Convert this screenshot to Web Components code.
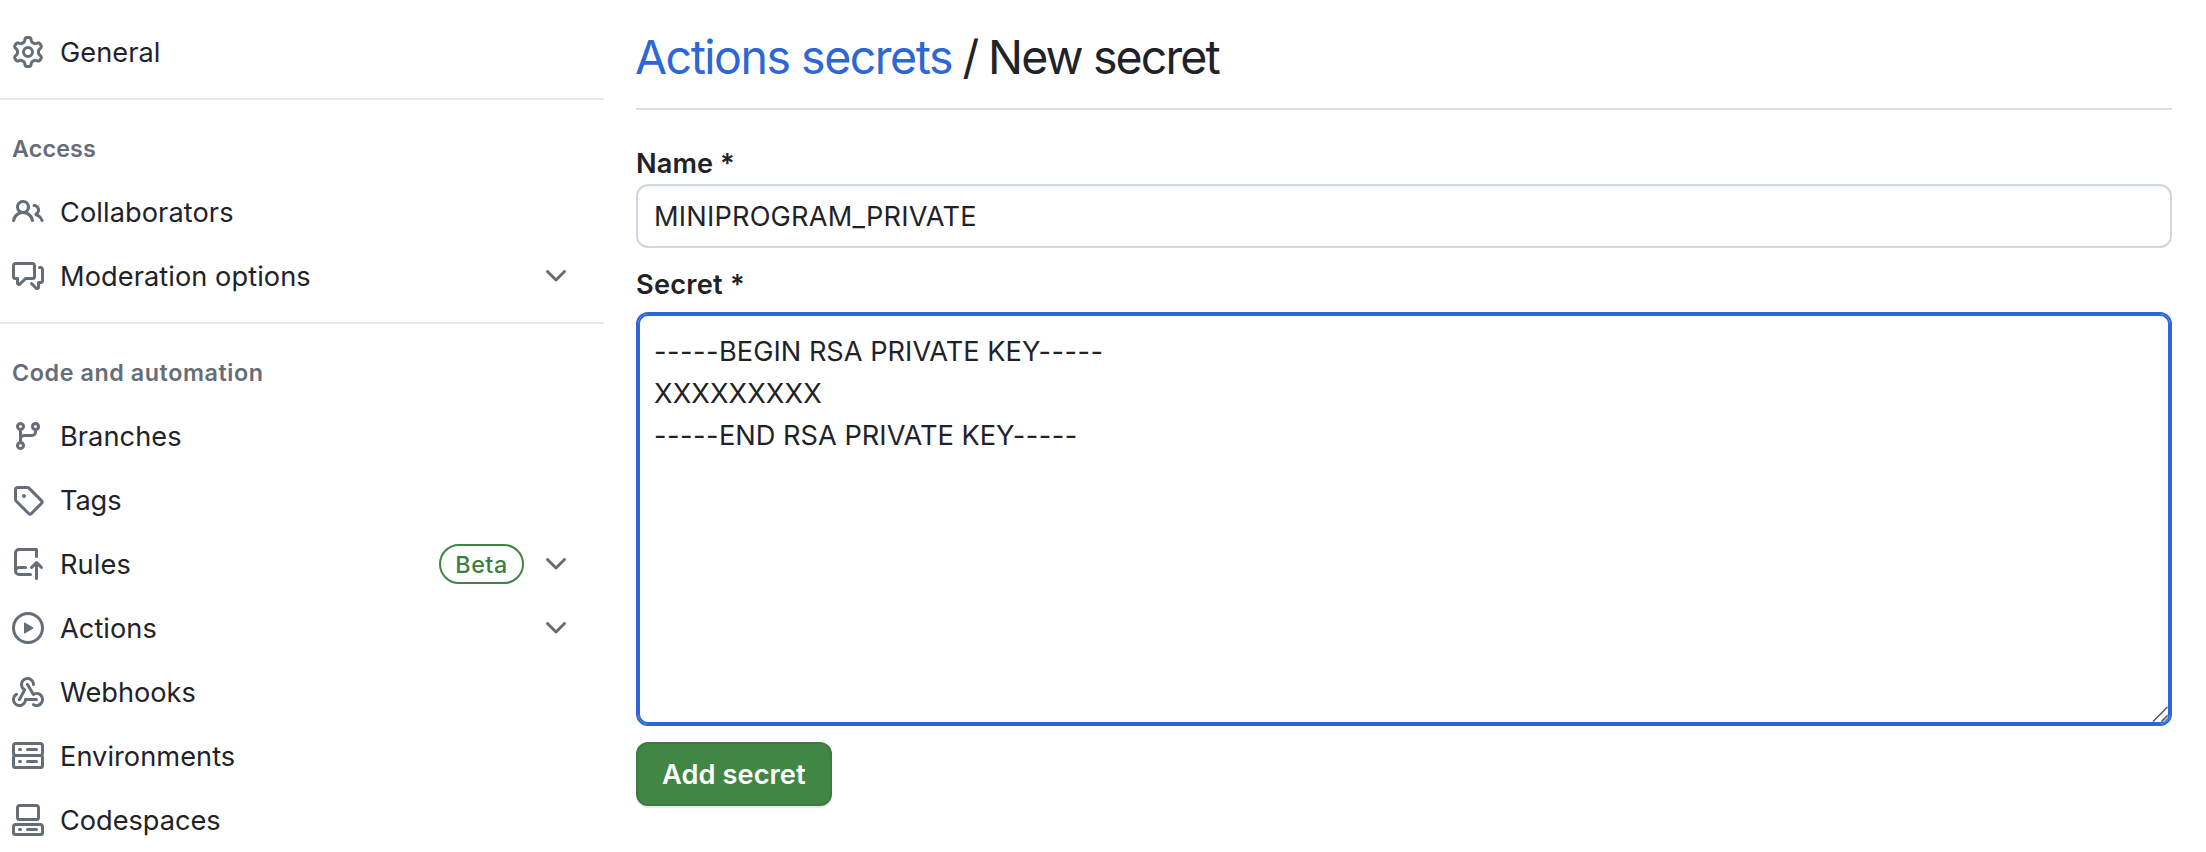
<!DOCTYPE html>
<html lang="en">
<head>
<meta charset="utf-8">
<title>New secret</title>
<style>
html,body{margin:0;height:100%;overflow:hidden;background:#fff}
body{font-family:Inter,"Liberation Sans",sans-serif;font-size:27.2px;color:#1f2328}
</style>
</head>
<body>
<settings-page>
  <settings-nav slot="nav">
    <nav-group>
      <nav-item icon="gear" style="--ls:.05px">General</nav-item>
    </nav-group>
    <nav-group heading="Access" style="--hls:.14px">
      <nav-item icon="people" style="--ls:.08px">Collaborators</nav-item>
      <nav-item icon="discussion" expandable style="--ls:.07px">Moderation options</nav-item>
    </nav-group>
    <nav-group heading="Code and automation" style="--hls:.58px">
      <nav-item icon="branch" style="--ls:.05px">Branches</nav-item>
      <nav-item icon="tag" style="--ls:-.1px">Tags</nav-item>
      <nav-item icon="push" expandable style="--ls:.1px">Rules<state-label slot="badge">Beta</state-label></nav-item>
      <nav-item icon="play" expandable style="--ls:.05px">Actions</nav-item>
      <nav-item icon="webhook" style="--ls:0px">Webhooks</nav-item>
      <nav-item icon="server" style="--ls:.04px">Environments</nav-item>
      <nav-item icon="codespaces" style="--ls:-.04px">Codespaces</nav-item>
    </nav-group>
  </settings-nav>
  <secret-form></secret-form>
</settings-page>
<script>
const ICONS = {
gear:"M8 0a8.2 8.2 0 0 1 .701.031C9.444.095 9.99.645 10.16 1.29l.288 1.107c.018.066.079.158.212.224.231.114.454.243.668.386.123.082.233.09.299.071l1.103-.303c.644-.176 1.392.021 1.82.63.27.385.506.792.704 1.218.315.675.111 1.422-.364 1.891l-.814.806c-.049.048-.098.147-.088.294.016.257.016.515 0 .772-.01.147.038.246.088.294l.814.806c.475.469.679 1.216.364 1.891a7.977 7.977 0 0 1-.704 1.217c-.428.61-1.176.807-1.82.63l-1.102-.302c-.067-.019-.177-.011-.3.071a5.909 5.909 0 0 1-.668.386c-.133.066-.194.158-.211.224l-.29 1.106c-.168.646-.715 1.196-1.458 1.26a8.006 8.006 0 0 1-1.402 0c-.743-.064-1.289-.614-1.458-1.26l-.289-1.106c-.018-.066-.079-.158-.212-.224a5.738 5.738 0 0 1-.668-.386c-.123-.082-.233-.09-.299-.071l-1.103.303c-.644.176-1.392-.021-1.82-.63a8.12 8.12 0 0 1-.704-1.218c-.315-.675-.111-1.422.363-1.891l.815-.806c.05-.048.098-.147.088-.294a6.214 6.214 0 0 1 0-.772c.01-.147-.038-.246-.088-.294l-.815-.806C.635 6.045.431 5.298.746 4.623a7.92 7.92 0 0 1 .704-1.217c.428-.61 1.176-.807 1.82-.63l1.102.302c.067.019.177.011.3-.071.214-.143.437-.272.668-.386.133-.066.194-.158.211-.224l.29-1.106C6.009.645 6.556.095 7.299.03 7.53.01 7.764 0 8 0Zm-.571 1.525c-.036.003-.108.036-.137.146l-.289 1.105c-.147.561-.549.967-.998 1.189-.173.086-.34.183-.5.29-.417.278-.97.423-1.529.27l-1.103-.303c-.109-.03-.175.016-.195.045-.22.312-.412.644-.573.99-.014.031-.021.11.059.19l.815.806c.411.406.562.957.53 1.456a4.709 4.709 0 0 0 0 .582c.032.499-.119 1.05-.53 1.456l-.815.806c-.081.08-.073.159-.059.19.162.346.353.677.573.989.02.03.085.076.195.046l1.102-.303c.56-.153 1.113-.008 1.53.27.161.107.328.204.501.29.447.222.85.629.997 1.189l.289 1.105c.029.109.101.143.137.146a6.6 6.6 0 0 0 1.142 0c.036-.003.108-.036.137-.146l.289-1.105c.147-.561.549-.967.998-1.189.173-.086.34-.183.5-.29.417-.278.97-.423 1.529-.27l1.103.303c.109.029.175-.016.195-.045.22-.313.411-.644.573-.99.014-.031.021-.11-.059-.19l-.815-.806c-.411-.406-.562-.957-.53-1.456a4.709 4.709 0 0 0 0-.582c-.032-.499.119-1.05.53-1.456l.815-.806c.081-.08.073-.159.059-.19a6.464 6.464 0 0 0-.573-.989c-.02-.03-.085-.076-.195-.046l-1.102.303c-.56.153-1.113.008-1.53-.27a4.44 4.44 0 0 0-.501-.29c-.447-.222-.85-.629-.997-1.189l-.289-1.105c-.029-.11-.101-.143-.137-.146a6.6 6.6 0 0 0-1.142 0ZM11 8a3 3 0 1 1-6 0 3 3 0 0 1 6 0ZM9.5 8a1.5 1.5 0 1 0-3.001.001A1.5 1.5 0 0 0 9.5 8Z",
people:"M2 5.5a3.5 3.5 0 1 1 5.898 2.549 5.508 5.508 0 0 1 3.034 4.084.75.75 0 1 1-1.482.235 4 4 0 0 0-7.9 0 .75.75 0 0 1-1.482-.236A5.507 5.507 0 0 1 3.102 8.05 3.493 3.493 0 0 1 2 5.5ZM11 4a3.001 3.001 0 0 1 2.22 5.018 5.01 5.01 0 0 1 2.56 3.012.749.749 0 0 1-.885.954.752.752 0 0 1-.549-.514 3.507 3.507 0 0 0-2.522-2.372.75.75 0 0 1-.574-.73v-.352a.75.75 0 0 1 .416-.672A1.5 1.5 0 0 0 11 5.5.75.75 0 0 1 11 4Zm-5.5-.5a2 2 0 1 0-.001 3.999A2 2 0 0 0 5.5 3.5Z",
discussion:"M1.75 1h8.5c.966 0 1.75.784 1.75 1.75v5.5A1.75 1.75 0 0 1 10.25 10H7.061l-2.574 2.573A1.458 1.458 0 0 1 2 11.543V10h-.25A1.75 1.75 0 0 1 0 8.25v-5.5C0 1.784.784 1 1.75 1ZM1.5 2.75v5.5c0 .138.112.25.25.25h1a.75.75 0 0 1 .75.75v2.19l2.72-2.72a.749.749 0 0 1 .53-.22h3.5a.25.25 0 0 0 .25-.25v-5.5a.25.25 0 0 0-.25-.25h-8.5a.25.25 0 0 0-.25.25Zm13 2a.25.25 0 0 0-.25-.25h-.5a.75.75 0 0 1 0-1.5h.5c.966 0 1.75.784 1.75 1.75v5.5A1.75 1.75 0 0 1 14.25 12H14v1.543a1.458 1.458 0 0 1-2.487 1.03L9.22 12.28a.749.749 0 0 1 .326-1.275.749.749 0 0 1 .734.215l2.22 2.22v-2.19a.75.75 0 0 1 .75-.75h1a.25.25 0 0 0 .25-.25Z",
branch:"M9.5 3.25a2.25 2.25 0 1 1 3 2.122V6A2.5 2.5 0 0 1 10 8.5H6a1 1 0 0 0-1 1v1.128a2.251 2.251 0 1 1-1.5 0V5.372a2.25 2.25 0 1 1 1.5 0v1.836A2.493 2.493 0 0 1 6 7h4a1 1 0 0 0 1-1v-.628A2.25 2.25 0 0 1 9.5 3.25Zm-6 0a.75.75 0 1 0 1.5 0 .75.75 0 0 0-1.5 0Zm8.25-.75a.75.75 0 1 0 0 1.5.75.75 0 0 0 0-1.5ZM4.25 12a.75.75 0 1 0 0 1.5.75.75 0 0 0 0-1.5Z",
tag:"M1 7.775V2.75C1 1.784 1.784 1 2.75 1h5.025c.464 0 .91.184 1.238.513l6.25 6.25a1.75 1.75 0 0 1 0 2.474l-5.026 5.026a1.75 1.75 0 0 1-2.474 0l-6.25-6.25A1.752 1.752 0 0 1 1 7.775Zm1.5 0c0 .066.026.13.073.177l6.25 6.25a.25.25 0 0 0 .354 0l5.025-5.025a.25.25 0 0 0 0-.354l-6.25-6.25a.25.25 0 0 0-.177-.073H2.75a.25.25 0 0 0-.25.25ZM6 5a1 1 0 1 1 0 2 1 1 0 0 1 0-2Z",
push:"M1 2.5A2.5 2.5 0 0 1 3.5 0h8.75a.75.75 0 0 1 .75.75v3.5a.75.75 0 0 1-1.5 0V1.5h-8a1 1 0 0 0-1 1v6.708A2.493 2.493 0 0 1 3.5 9h3.25a.75.75 0 0 1 0 1.5H3.5a1 1 0 0 0 0 2h5.75a.75.75 0 0 1 0 1.5H3.5A2.5 2.5 0 0 1 1 11.5Zm13.23 7.79h-.001l-1.224-1.224v6.184a.75.75 0 0 1-1.5 0V9.066L10.28 10.29a.75.75 0 0 1-1.06-1.061l2.505-2.504a.75.75 0 0 1 1.06 0L15.29 9.23a.751.751 0 0 1-.018 1.042.751.751 0 0 1-1.042.018Z",
play:"M8 0a8 8 0 1 1 0 16A8 8 0 0 1 8 0ZM1.5 8a6.5 6.5 0 1 0 13 0 6.5 6.5 0 0 0-13 0Zm4.879-2.773 4.264 2.559a.25.25 0 0 1 0 .428l-4.264 2.559A.25.25 0 0 1 6 10.559V5.442a.25.25 0 0 1 .379-.215Z",
webhook:"M5.5 4.25a2.25 2.25 0 0 1 4.5 0 .75.75 0 0 0 1.5 0 3.75 3.75 0 1 0-6.14 2.889l-2.272 4.258a.75.75 0 0 0 1.324.706L7 7.25a.75.75 0 0 0-.309-1.015A2.25 2.25 0 0 1 5.5 4.25ZM7.364 3.607a.75.75 0 0 1 1.03.257l2.608 4.349a3.75 3.75 0 1 1-.628 6.785.75.75 0 0 1 .752-1.299 2.25 2.25 0 1 0-.033-3.88.75.75 0 0 1-1.03-.256L7.107 4.636a.75.75 0 0 1 .257-1.03ZM2.9 8.776A.75.75 0 0 1 2.625 9.8 2.25 2.25 0 1 0 6 11.75a.75.75 0 0 1 .75-.751h5.5a.75.75 0 0 1 0 1.5H7.425a3.751 3.751 0 1 1-5.55-3.998.75.75 0 0 1 1.024.274Z",
server:"M1.75 1h12.5c.966 0 1.75.784 1.75 1.75v4c0 .372-.116.717-.314 1 .198.283.314.628.314 1v4a1.75 1.75 0 0 1-1.75 1.75H1.75A1.75 1.75 0 0 1 0 12.75v-4c0-.358.109-.707.314-1a1.739 1.739 0 0 1-.314-1v-4C0 1.784.784 1 1.75 1ZM1.5 2.75v4c0 .138.112.25.25.25h12.5a.25.25 0 0 0 .25-.25v-4a.25.25 0 0 0-.25-.25H1.75a.25.25 0 0 0-.25.25Zm.25 5.75a.25.25 0 0 0-.25.25v4c0 .138.112.25.25.25h12.5a.25.25 0 0 0 .25-.25v-4a.25.25 0 0 0-.25-.25ZM7 4.75A.75.75 0 0 1 7.75 4h4.5a.75.75 0 0 1 0 1.5h-4.5A.75.75 0 0 1 7 4.75ZM7.75 10h4.5a.75.75 0 0 1 0 1.5h-4.5a.75.75 0 0 1 0-1.5ZM3 4.75A.75.75 0 0 1 3.75 4h.5a.75.75 0 0 1 0 1.5h-.5A.75.75 0 0 1 3 4.75ZM3.75 10h.5a.75.75 0 0 1 0 1.5h-.5a.75.75 0 0 1 0-1.5Z",
codespaces:"M0 11.25c0-.966.784-1.75 1.75-1.75h12.5c.966 0 1.75.784 1.75 1.75v3A1.75 1.75 0 0 1 14.25 16H1.75A1.75 1.75 0 0 1 0 14.25Zm2-9.5C2 .784 2.784 0 3.75 0h8.5C13.216 0 14 .784 14 1.75v5a1.75 1.75 0 0 1-1.75 1.75h-8.5A1.75 1.75 0 0 1 2 6.75Zm1.75-.25a.25.25 0 0 0-.25.25v5c0 .138.112.25.25.25h8.5a.25.25 0 0 0 .25-.25v-5a.25.25 0 0 0-.25-.25Zm-2 9.5a.25.25 0 0 0-.25.25v3c0 .138.112.25.25.25h12.5a.25.25 0 0 0 .25-.25v-3a.25.25 0 0 0-.25-.25ZM7 12.75a.75.75 0 0 1 .75-.75h4.5a.75.75 0 0 1 0 1.5h-4.5a.75.75 0 0 1-.75-.75Zm-4 0a.75.75 0 0 1 .75-.75h.5a.75.75 0 0 1 0 1.5h-.5a.75.75 0 0 1-.75-.75Z",
chevron:"M12.78 5.22a.749.749 0 0 1 0 1.06l-4.25 4.25a.749.749 0 0 1-1.06 0L3.22 6.28a.749.749 0 1 1 1.06-1.06L8 8.939l3.72-3.719a.749.749 0 0 1 1.06 0Z"
};

function define(name, render) {
  customElements.define(name, class extends HTMLElement {
    constructor() {
      super();
      this.attachShadow({ mode: "open" });
    }
    connectedCallback() {
      this.shadowRoot.innerHTML = render(this);
    }
  });
}

define("oct-icon", el => `
<style>:host{display:block;width:32px;height:32px;flex:none;color:#656d76}svg{display:block}</style>
<svg width="32" height="32" viewBox="0 0 16 16" fill="currentColor"><path d="${ICONS[el.getAttribute("name")]}"/></svg>`);

define("settings-page", () => `
<style>
:host{display:grid;grid-template-columns:604px 1536px;column-gap:32px;height:852px;overflow:hidden}
</style><slot name="nav"></slot><slot></slot>`);

define("settings-nav", () => `
<style>:host{display:block;padding-top:20px}</style><slot></slot>`);

define("nav-group", el => {
  const heading = el.getAttribute("heading");
  return `
<style>
:host{display:block}
:host(:not(:first-of-type)){border-top:2px solid #e6ebf0;margin-top:14px;padding-top:16px}
h3{margin:0;height:64px;line-height:66px;padding-left:12px;font-size:23.3px;font-weight:600;color:#656d76;letter-spacing:var(--hls,0);white-space:nowrap}
</style>${heading ? `<h3>${heading}</h3>` : ""}<slot></slot>`;
});

define("nav-item", el => `
<style>
:host{display:flex;align-items:center;height:64px;padding:0 32px 0 12px}
.label{flex:1;height:64px;line-height:66px;letter-spacing:var(--ls,0);white-space:nowrap;margin-left:16px}
.chevron{margin-left:16px}
</style>
<oct-icon name="${el.getAttribute("icon")}"></oct-icon>
<span class="label"><slot></slot></span>
<slot name="badge"></slot>
${el.hasAttribute("expandable") ? '<oct-icon class="chevron" name="chevron"></oct-icon>' : ""}`);

define("state-label", () => `
<style>
:host{display:block;box-sizing:border-box;width:85px;height:40px;border:2px solid #3f8544;border-radius:20px;
text-align:center;line-height:38px;font-size:23.3px;font-weight:500;color:#3b7e3e;letter-spacing:.5px}
</style><slot></slot>`);

define("page-title", () => `
<style>
:host{display:flex;height:108px;border-bottom:2px solid #d8dee4;font-size:46.5px;line-height:114px;white-space:nowrap}
a{width:327.5px;margin-left:-1px;color:#2d66d6;letter-spacing:-1.5px;text-decoration:none}
i{width:25.5px;font-style:normal}
b{font-weight:400;letter-spacing:-1.89px}
</style><a>Actions secrets</a><i>/</i><b>New secret</b>`);

define("text-field", () => `
<style>
:host{display:block;box-sizing:border-box;height:64px;border:2px solid #d0d7de;border-radius:12px;padding:0 16px;
line-height:62px;box-shadow:inset 0 2px 0 rgba(208,215,222,.2);letter-spacing:.19px;white-space:nowrap}
</style><slot></slot>`);

define("text-area", () => `
<style>
:host{display:block;position:relative;box-sizing:border-box;height:414px;border:2px solid #2d66d6;border-radius:12px;
box-shadow:inset 0 0 0 2px #2d66d6;padding:17px 16px 15px;line-height:42px;white-space:nowrap}
svg{position:absolute;right:2px;bottom:2px}
</style><slot></slot>
<svg width="16" height="16" viewBox="0 0 16 16" fill="none"><path d="M16 8.500 8.500 16H12l4-4Z" fill="#b9d2ec"/><path d="M1 15.500 15.500 1M9.500 15.500l6-6" stroke="#555" stroke-width="1.500"/></svg>`);

define("key-line", () => `
<style>:host{display:block;height:42px}</style><slot></slot>`);
define("dash-run", () => `
<style>:host{display:inline;letter-spacing:.5px}:host([trailing]){margin-left:-10px}</style><slot></slot>`);

define("primary-button", () => `
<style>
:host{display:block;box-sizing:border-box;width:196px;height:64px;border:2px solid #3b7a40;border-radius:12px;background:#428646;
box-shadow:0 2px 0 rgba(31,35,40,.1);color:#fff;font-weight:600;line-height:62px;padding-left:24px;white-space:nowrap;letter-spacing:.08px}
</style><slot></slot>`);

define("secret-form", () => `
<style>
:host{display:block}
label{display:block;font-weight:600;white-space:nowrap}
.name{margin-top:32px;height:42px;line-height:44px;letter-spacing:.07px}
.secret{margin-top:14px;height:50px;line-height:46px;letter-spacing:.24px}
primary-button{margin-top:16px}
</style>
<page-title></page-title>
<label class="name">Name *</label>
<text-field>MINIPROGRAM_PRIVATE</text-field>
<label class="secret">Secret *</label>
<text-area><key-line><dash-run>-----</dash-run>BEGIN RSA PRIVATE KEY<dash-run trailing>-----</dash-run></key-line><key-line style="letter-spacing:.1px">XXXXXXXXX</key-line><key-line><dash-run>-----</dash-run>END RSA PRIVATE KEY<dash-run trailing>-----</dash-run></key-line></text-area>
<primary-button>Add secret</primary-button>`);
</script>
</body>
</html>
